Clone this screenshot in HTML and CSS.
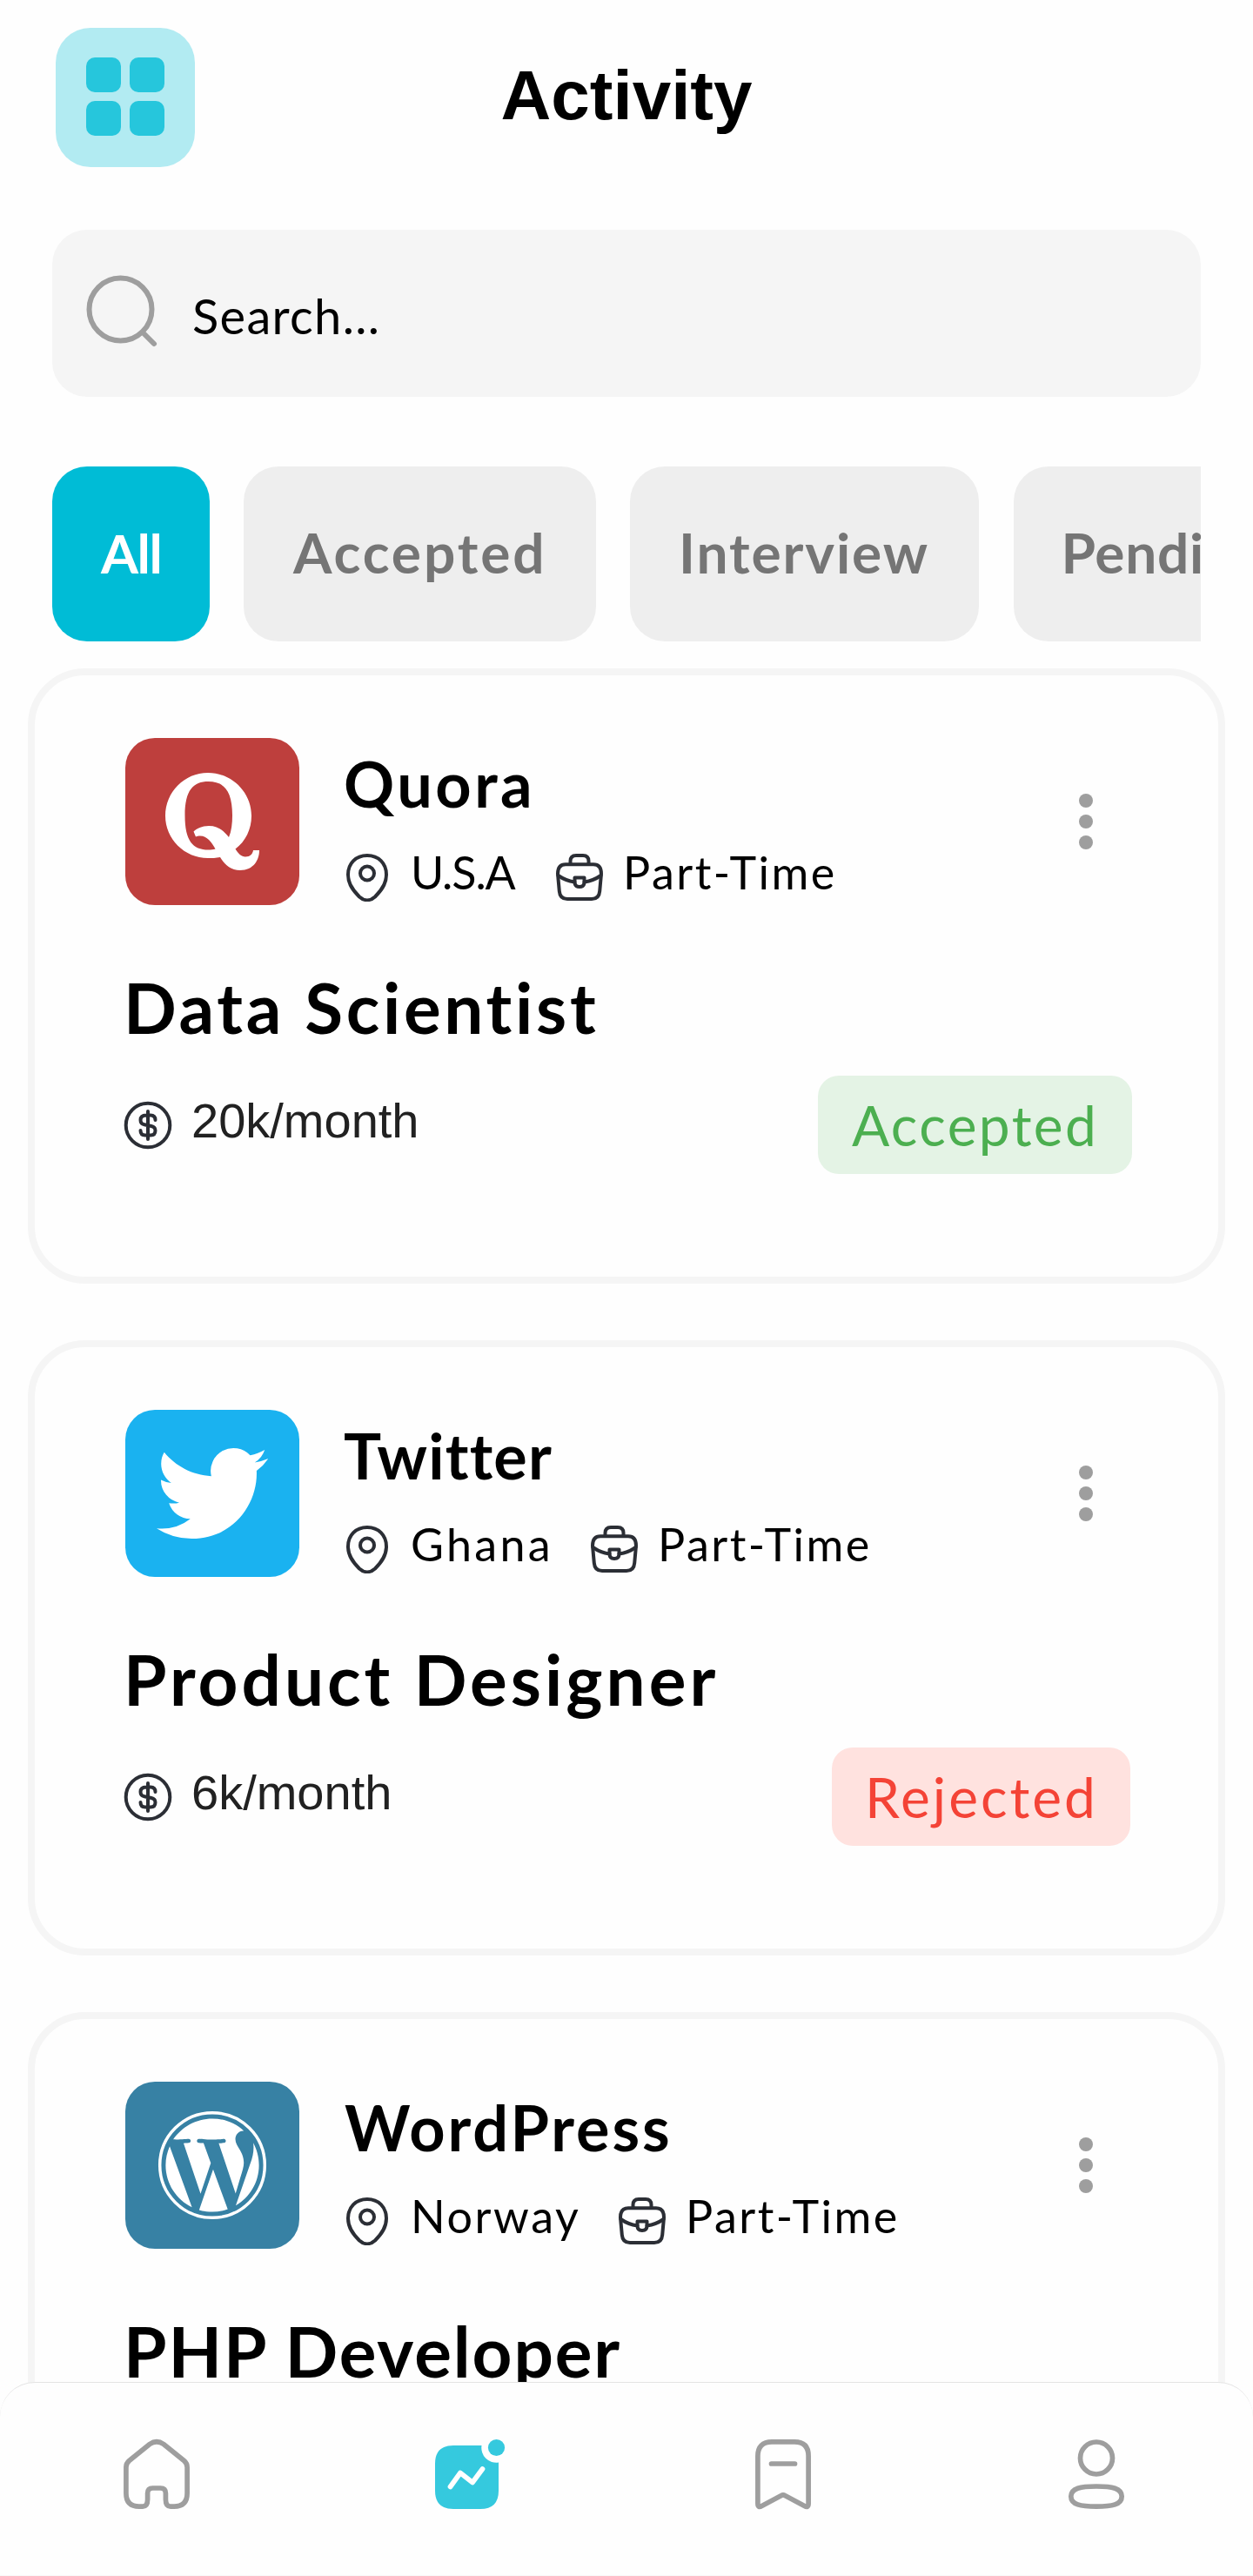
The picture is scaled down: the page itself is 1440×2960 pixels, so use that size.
FILE: index.html
```html
<!DOCTYPE html>
<html lang="en">
<head>
<meta charset="utf-8">
<title>Activity</title>
<link rel="stylesheet" href="styles.css">
</head>
<body>
<svg class="sprite" aria-hidden="true">
  <symbol id="pin" viewBox="0 0 56 56"><path d="M28 3C15 3 6 12 6 25c0 11 6 18.500 13 25.500 5.500 5 12.500 5 18 0C44 43.500 50 36 50 25 50 12 41 3 28 3z"/><circle cx="28" cy="23.500" r="8"/></symbol>
  <symbol id="case" viewBox="0 0 56 56"><path d="M17.500 13V9.500Q17.500 3 24 3h8Q38.500 3 38.500 9.500V13"/><path d="M12 13.200H44Q53 13.200 53 24L51.200 44Q50.500 53 42 53H14Q5.500 53 4.800 44L3 24Q3 13.200 12 13.200z"/><path d="M3.500 26Q12 32 22.500 33.500M52.500 26Q44 32 33.500 33.500"/><path d="M22.500 28.500h11v5Q33.500 39 28 39t-5.500-5.500z"/></symbol>
  <symbol id="coin" viewBox="0 0 56 56"><circle cx="28" cy="28" r="25.300"/><path d="M28 12V44M36.500 22Q36.500 16.500 31 16.500H26Q19.500 16.500 19.500 22 19.500 26.300 24 27.300L32 29Q36.500 30 36.500 34 36.500 39.500 31 39.500H25Q19.500 39.500 19.500 34"/></symbol>
</svg>

<header class="topbar">
  <button class="menu" aria-label="Menu"><i></i><i></i><i></i><i></i></button>
  <h1 class="title">Activity</h1>
</header>

<div class="search">
  <svg class="search-icon" viewBox="0 0 88 88"><circle cx="42.500" cy="42.500" r="36"/><path d="M69 70L81 82"/></svg>
  <span class="search-text">Search...</span>
</div>

<nav class="chips">
  <span class="chip chip-all">All</span>
  <span class="chip chip-accepted">Accepted</span>
  <span class="chip chip-interview">Interview</span>
  <span class="chip chip-pending">Pending</span>
</nav>

<main class="cards">
  <article class="card quora">
    <div class="card-head">
      <svg class="logo" viewBox="0 0 200 192"><path fill-rule="evenodd" d="M109 137C104 138 99.500 138 95 138 68 138 46 116 46 89.500 46 62 68 40 95 40s50 22 50 49.500c0 15.500-7 29.500-18.500 38 3 5 7 9 11.500 9 5.500 0 8.500-3.500 9-7.500H154c0 11-6.500 23-22 23-11 0-17.500-6-23-15zM103.500 127.500C99 119.500 94 112.500 86 112.500c-2 0-3.500.300-5 1L78.500 107.500C82 104 88 101 96 101c10 0 17 5 23 13C122 107 123 98 123 89 123 60 113 50 95.500 50S68.500 60 68.500 89c0 29 9 39.500 27 39.500 3 0 5.500-.300 8-1z"/></svg>
      <div class="info">
        <h2 class="company">Quora</h2>
        <div class="meta"><svg><use href="#pin"/></svg><span class="place">U.S.A</span><svg><use href="#case"/></svg><span class="type">Part-Time</span></div>
      </div>
      <div class="more"><i></i><i></i><i></i></div>
    </div>
    <h3 class="job">Data Scientist</h3>
    <div class="card-foot"><svg class="coin"><use href="#coin"/></svg><span class="salary">20k/month</span><span class="badge accepted">Accepted</span></div>
  </article>

  <article class="card twitter">
    <div class="card-head">
      <svg class="logo" viewBox="0 0 200 192"><path transform="translate(36 32) scale(5.333)" d="M23.953 4.570a10 10 0 01-2.825.775 4.958 4.958 0 002.163-2.723c-.951.555-2.005.959-3.127 1.184a4.920 4.920 0 00-8.384 4.482C7.690 8.095 4.067 6.130 1.640 3.162a4.822 4.822 0 00-.666 2.475c0 1.710.870 3.213 2.188 4.096a4.904 4.904 0 01-2.228-.616v.060a4.923 4.923 0 003.946 4.827 4.996 4.996 0 01-2.212.085 4.936 4.936 0 004.604 3.417 9.867 9.867 0 01-6.102 2.105c-.390 0-.779-.023-1.170-.067a13.995 13.995 0 007.557 2.209c9.053 0 13.998-7.496 13.998-13.985 0-.210 0-.420-.015-.630A9.935 9.935 0 0024 4.590z"/></svg>
      <div class="info">
        <h2 class="company">Twitter</h2>
        <div class="meta"><svg><use href="#pin"/></svg><span class="place">Ghana</span><svg><use href="#case"/></svg><span class="type">Part-Time</span></div>
      </div>
      <div class="more"><i></i><i></i><i></i></div>
    </div>
    <h3 class="job">Product Designer</h3>
    <div class="card-foot"><svg class="coin"><use href="#coin"/></svg><span class="salary">6k/month</span><span class="badge rejected">Rejected</span></div>
  </article>

  <article class="card wordpress">
    <div class="card-head">
      <svg class="logo" viewBox="0 0 200 192"><circle class="ring" cx="100" cy="96" r="60.300"/><path transform="translate(40.360 36.360) scale(4.970)" d="M21.469 6.825c.840 1.537 1.318 3.300 1.318 5.175 0 3.979-2.156 7.456-5.363 9.325l3.295-9.527c.615-1.540.820-2.771.820-3.864 0-.405-.026-.780-.070-1.110m-7.981.105c.647-.030 1.232-.105 1.232-.105.582-.075.514-.930-.067-.899 0 0-1.755.135-2.880.135-1.064 0-2.850-.150-2.850-.150-.585-.030-.661.855-.075.885 0 0 .540.061 1.125.090l1.680 4.605-2.370 7.080L5.354 6.900c.649-.030 1.234-.100 1.234-.100.585-.075.516-.930-.065-.896 0 0-1.746.138-2.874.138-.200 0-.438-.008-.690-.015C4.911 3.150 8.235 1.215 12 1.215c2.809 0 5.365 1.072 7.286 2.833-.046-.003-.091-.009-.141-.009-1.060 0-1.812.923-1.812 1.914 0 .890.513 1.643 1.060 2.531.411.720.890 1.643.890 2.977 0 .915-.354 1.994-.821 3.479l-1.075 3.585-3.900-11.610.001.014zM12 22.784c-1.059 0-2.081-.153-3.048-.437l3.237-9.406 3.315 9.087c.024.053.050.101.078.149-1.120.393-2.325.609-3.582.609M1.211 12c0-1.564.336-3.050.935-4.390L7.290 21.709C3.694 19.960 1.212 16.271 1.211 12"/></svg>
      <div class="info">
        <h2 class="company">WordPress</h2>
        <div class="meta"><svg><use href="#pin"/></svg><span class="place">Norway</span><svg><use href="#case"/></svg><span class="type">Part-Time</span></div>
      </div>
      <div class="more"><i></i><i></i><i></i></div>
    </div>
    <h3 class="job">PHP Developer</h3>
  </article>
</main>

<footer class="tabbar">
  <svg viewBox="0 0 80 80"><path d="M29.600 69V62Q29.600 56 35.500 56H44.500Q50.400 56 50.400 62V69Q50.400 77.100 56 77.100H60Q75.100 77.100 75.100 62V32Q75.100 27.500 71.500 24.500L48 5.500Q40 0 32 5.500L8.500 24.500Q4.900 27.500 4.900 32V62Q4.900 77.100 20 77.100H24Q29.600 77.100 29.600 69z"/></svg>
  <svg class="active" viewBox="0 0 80 80"><path class="solid" d="M21 7H53.500A17 17 0 0 0 73 26.500V59Q73 80 52 80H21Q0 80 0 59V28Q0 7 21 7z"/><circle class="solid" cx="70.500" cy="9.500" r="9.600"/><path class="trend" d="M17.500 54.500L29 38.500 43 49.500 54.500 34"/></svg>
  <svg viewBox="0 0 80 80"><path d="M27 2.900H53Q69.100 2.900 69.100 19V74Q69 79 64.500 76.500L42 64.500Q40 63.300 38 64.500L15.500 76.500Q11 79 10.900 74V19Q10.900 2.900 27 2.900zM26.500 28H53.500"/></svg>
  <svg viewBox="0 0 80 80"><circle cx="40" cy="21.500" r="18.500"/><path d="M10.800 65.500C10.800 56 22 54 40 54S69.200 56 69.200 65.500 58 77.100 40 77.100 10.800 75 10.800 65.500z"/></svg>
</footer>
</body>
</html>
```
FILE: styles.css
```css
* { box-sizing: border-box; }

body {
  margin: 0;
  height: 2960px;
  overflow: hidden;
  background: #fefefe;
  color: #000;
  font-family: "Lato", sans-serif;
}

h1, h2, h3 { margin: 0; }

.sprite { display: none; }

svg { flex: none; }

/* Header */
.topbar {
  display: grid;
  grid-template-columns: 160px 1fr 160px;
  align-items: center;
  padding: 32px 64px 0;
}

.menu {
  display: grid;
  grid-template-columns: 40px 40px;
  grid-auto-rows: 40px;
  gap: 10px;
  place-content: center;
  width: 160px;
  height: 160px;
  padding: 0 0 2px;
  border: 0;
  border-radius: 40px;
  background: #b2ebf2;
}

.menu i { border-radius: 10px; background: #26c6dc; }

.title {
  padding-bottom: 5px;
  text-align: center;
  font: bold 80px/92px "Liberation Sans", sans-serif;
}

/* Search */
.search {
  display: flex;
  align-items: center;
  gap: 37px;
  height: 192px;
  margin: 72px 60px 0;
  padding-left: 36px;
  border-radius: 40px;
  background: #f5f5f5;
}

.search-icon {
  width: 88px;
  height: 88px;
  margin-bottom: 7px;
  fill: none;
  stroke: #9e9e9e;
  stroke-width: 6;
  stroke-linecap: round;
}

.search-text { padding-top: 5px; font-size: 56px; letter-spacing: 1.3px; }

/* Filter chips */
.chips {
  display: flex;
  gap: 39.5px;
  height: 200.5px;
  margin: 80px 60px 0;
  overflow: hidden;
}

.chip {
  flex: none;
  display: flex;
  align-items: center;
  padding: 0 0 3px 57px;
  border-radius: 40px;
  background: #eee;
  color: #757575;
  font-size: 64px;
  font-weight: 700;
}

.chip-all { width: 180.500px; padding-left: 56px; background: #00bcd6; color: #fff; font-size: 62px; letter-spacing: -1.5px; }
.chip-accepted { width: 404.500px; letter-spacing: 2.9px; }
.chip-interview { width: 401px; padding-left: 56px; letter-spacing: 1.9px; }
.chip-pending { width: 360px; padding-left: 55px; letter-spacing: .7px; }

/* Job cards */
.cards {
  display: flex;
  flex-direction: column;
  gap: 65px;
  margin: 31.500px 32px 0;
}

.card {
  flex: none;
  height: 707px;
  padding: 72px 99px 0 104px;
  border: 8px solid #f5f5f5;
  border-radius: 66px;
}

.card-head { display: flex; align-items: flex-start; }

.logo { width: 200px; height: 192px; border-radius: 34px; fill: #fff; }
.quora .logo { background: #be3f3d; }
.twitter .logo { background: #1ab2f0; }
.wordpress .logo { background: #3781a4; }
.ring { fill: none; stroke: #fff; stroke-width: 3.5; }

.info { flex: 1; padding: 7px 0 0 50px; }

.company { padding-left: 1px; font-size: 72px; line-height: 90px; }
.quora .company { letter-spacing: 3.5px; }
.twitter .company { letter-spacing: 1.2px; }
.wordpress .company { padding-left: 2px; letter-spacing: 2.9px; }

.meta {
  display: flex;
  gap: 22px;
  margin-top: 35px;
  font-size: 52px;
  line-height: 44px;
}

.meta svg, .coin {
  width: 56px;
  height: 56px;
  fill: none;
  stroke: #2b2e35;
  stroke-width: 4;
  stroke-linecap: round;
  stroke-linejoin: round;
}

.place { margin-right: 20px; white-space: nowrap; }
.quora .place { width: 124px; letter-spacing: -1.1px; }
.twitter .place { width: 164px; letter-spacing: 3.3px; }
.wordpress .place { width: 196px; letter-spacing: 2.6px; }
.type { letter-spacing: 2.5px; }

.more { display: flex; flex-direction: column; gap: 8px; margin: 64px 45px 0 0; }
.more i { width: 16px; height: 16px; border-radius: 50%; background: #9e9e9e; }

.job { margin: 67px 0 0 -2px; padding-top: 1px; font-size: 80px; line-height: 99px; white-space: nowrap; }
.quora .job { letter-spacing: 3.7px; }
.twitter .job { letter-spacing: 4px; }
.wordpress .job { letter-spacing: 1.9px; }

.card-foot { display: flex; align-items: center; margin: 29px 0 0 -2px; }

.salary {
  flex: 1;
  padding: 0 0 10px 22px;
  color: #212121;
  font: 56px/64px "Liberation Sans", sans-serif;
}

.badge { height: 113px; border-radius: 24px; font-size: 64px; line-height: 113px; }
.accepted { width: 361px; padding-left: 39px; background: #e4f3e5; color: #4caf50; letter-spacing: 2.4px; }
.rejected { width: 343px; margin-right: 2px; padding-left: 38px; background: #ffe2df; color: #f44336; letter-spacing: 3px; }

/* Bottom navigation */
.tabbar {
  position: fixed;
  inset: auto 0 0;
  display: grid;
  grid-template-columns: repeat(4, 1fr);
  justify-items: center;
  height: 223px;
  padding-top: 65px;
  border-top: 1px solid #e4e4e4;
  border-bottom: 1px solid #f8f8f8;
  border-radius: 40px 40px 0 0;
  background: #fefefe;
}

.tabbar svg {
  width: 80px;
  height: 80px;
  overflow: visible;
  fill: none;
  stroke: #9e9e9e;
  stroke-width: 5.7;
  stroke-linecap: round;
  stroke-linejoin: round;
}

.tabbar .solid { fill: #35c9de; stroke: none; }
.tabbar .trend { stroke: #fff; }
```
